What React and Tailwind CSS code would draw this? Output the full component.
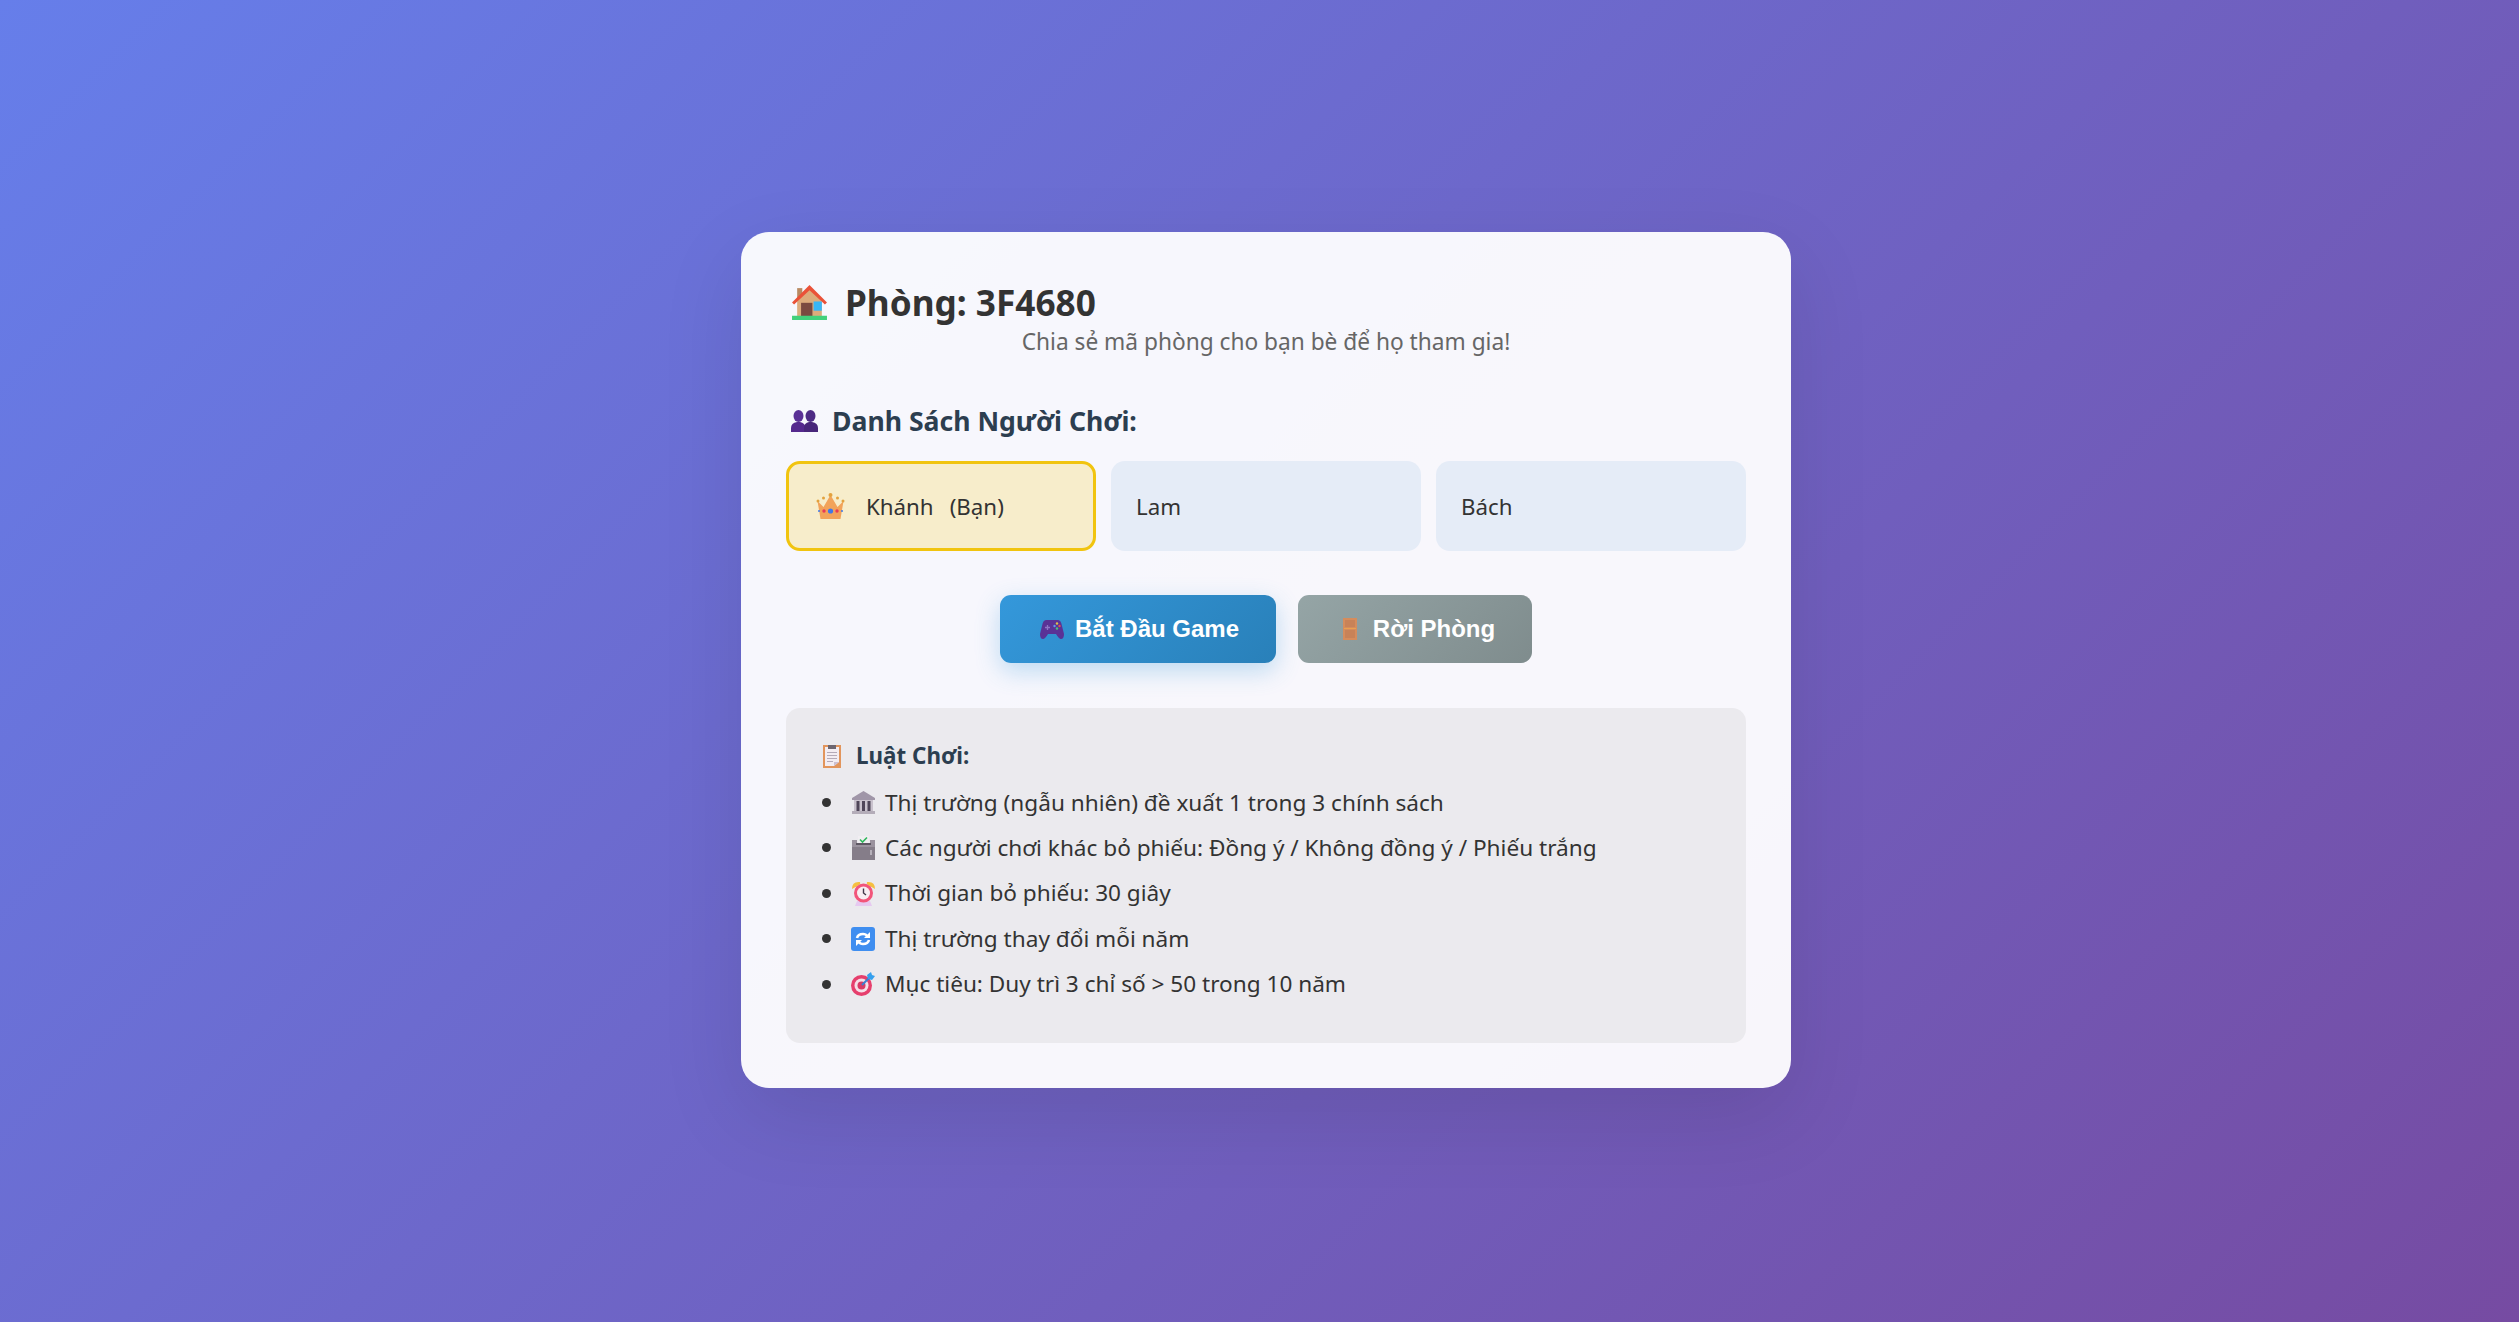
const font = "font-['Noto_Sans','Open_Sans',sans-serif]";

function House() {
  return (
    <svg viewBox="0 0 36 34" className="w-[37px] h-[35px]">
      <path d="M6 3h5v12H6z" fill="#b98a62" />
      <path d="M6 15 18 4l12 11v17H6z" fill="#dcac7c" />
      <path d="M1 17 18 0l17 17-2 2L18 5 3 19z" fill="#ea5238" />
      <path d="M8 15h13v17H8z" fill="#7a4a40" transform="translate(3 2) scale(.85 .9) translate(0 2)" />
      <path d="M22 16h8v9h-8z" fill="#38b6f6" />
      <path d="M1 30h34v4H1z" fill="#42d17b" />
    </svg>
  );
}

function People() {
  return (
    <svg viewBox="0 0 27 22" className="w-[27px] h-[22px]">
      <ellipse cx="7.500" cy="6" rx="5" ry="6" fill="#5a3096" />
      <path d="M0 22v-4q0-5 6-6h3q5 1 6 6v4z" fill="#55298e" />
      <ellipse cx="19.500" cy="6" rx="5" ry="6" fill="#4d2a84" />
      <path d="M13 22v-4q0-5 5-6h3q6 1 6 6v4z" fill="#48267a" />
    </svg>
  );
}

function Crown() {
  return (
    <svg viewBox="0 0 28 26" className="w-[29px] h-[26px]">
      <path d="M1 8l6 6 7-12 7 12 6-6-3 18H4z" fill="#f2a35a" />
      <circle cx="14" cy="2" r="2" fill="#e3a23e" />
      <circle cx="7" cy="5" r="1.500" fill="#e3a23e" />
      <circle cx="21" cy="5" r="1.500" fill="#e3a23e" />
      <circle cx="1.500" cy="8" r="1.500" fill="#e3a23e" />
      <circle cx="26.500" cy="8" r="1.500" fill="#e3a23e" />
      <circle cx="14" cy="18" r="2.600" fill="#3f78e8" />
      <circle cx="7.500" cy="18" r="1.700" fill="#e83a58" />
      <circle cx="20.500" cy="18" r="1.700" fill="#e83a58" />
      <circle cx="2.500" cy="18" r="1" fill="#3f78e8" />
      <circle cx="25.500" cy="18" r="1" fill="#3f78e8" />
    </svg>
  );
}

function Gamepad() {
  return (
    <svg viewBox="0 0 24 20" className="w-[24px] h-[20px]">
      <path d="M6 1h12q3 0 4 6l2 8q0 5-3 5-2 0-5-5h-8q-3 5-5 5-3 0-3-5l2-8q1-6 4-6z" fill="#5a3296" />
      <path d="M7.500 6v5M5 8.500h5" stroke="#8f74c6" strokeWidth="1.300" />
      <circle cx="17" cy="4.500" r="1.200" fill="#e0c04a" />
      <circle cx="19.500" cy="7" r="1.200" fill="#e0564a" />
      <circle cx="14.500" cy="7" r="1.200" fill="#5f9be8" />
      <circle cx="17" cy="9.500" r="1.200" fill="#48c47a" />
    </svg>
  );
}

function Door() {
  return (
    <svg viewBox="0 0 14 22" className="w-[14px] h-[22px]">
      <path d="M0 0h14v22H0z" fill="#d58c5c" />
      <path d="M2 2h10v7H2zM2 12h10v8H2z" fill="#c88258" />
      <path d="M1 10h12v1H1z" fill="#e9a050" />
    </svg>
  );
}

function Clipboard() {
  return (
    <svg viewBox="0 0 18 23" className="w-[18px] h-[23px]">
      <path d="M0 0h18v23H0z" fill="#e2955c" />
      <path d="M2 2h14v15l-5 4H2z" fill="#f3edf2" />
      <path d="M11 21v-4h5z" fill="#cdbfd0" />
      <path d="M5 0h8v4H5z" fill="#6d6670" />
      <path d="M4 7.500h10M4 10.500h10M4 13.500h10M4 16.500h6" stroke="#b4aab8" />
    </svg>
  );
}

function Bank() {
  return (
    <svg viewBox="0 0 23 23" className="w-[23px] h-[23px]">
      <path d="M11.500 0 23 7v2H0V7z" fill="#a096a8" />
      <path d="M2 9h19v11H2z" fill="#c9c2cd" />
      <path d="M4.500 10h3v10h-3zM10 10h3v10h-3zM15.500 10h3v10h-3z" fill="#4f4659" />
      <path d="M0 20h23v3H0z" fill="#b4adb9" />
    </svg>
  );
}

function Ballot() {
  return (
    <svg viewBox="0 0 23 24" className="w-[23px] h-[24px]">
      <path d="M6 0h11v8H6z" fill="#f1eef2" />
      <path d="m8 3.500 2.500 2.500L15 1.500" stroke="#2fb85c" strokeWidth="1.600" fill="none" />
      <path d="M0 4h5v4h13V4h5v20H0z" fill="#9a929e" />
      <path d="M0 11h23v13H0z" fill="#857d89" />
      <path d="M4 7h15v2H4z" fill="#5e5763" />
      <path d="M18 14h2v5h-2z" fill="#b6b0ba" />
    </svg>
  );
}

function Alarm() {
  return (
    <svg viewBox="0 0 23 25" className="w-[23px] h-[25px]">
      <path d="M0 8q0-8 8-7 1 2-1 3z" fill="#f5bf3f" />
      <path d="M23 8q0-8-8-7-1 2 1 3z" fill="#f5bf3f" />
      <path d="M5 20h13l2 5H3z" fill="#e6c9f0" />
      <circle cx="11.500" cy="12" r="9.500" fill="#f2557a" />
      <circle cx="11.500" cy="12" r="6.500" fill="#f8eef2" />
      <path d="M11.500 7.500V12l2.500 2" stroke="#43394a" strokeWidth="1.400" fill="none" />
    </svg>
  );
}

function Refresh() {
  return (
    <svg viewBox="0 0 24 24" className="w-[24px] h-[24px]">
      <rect width="24" height="24" rx="3" fill="#3f8ef0" />
      <path d="M6 11q1-4 6-4 3 0 4 2" fill="none" stroke="#fff" strokeWidth="2.600" />
      <path d="M13 11h6V5z" fill="#fff" />
      <path d="M18 13q-1 4-6 4-3 0-4-2" fill="none" stroke="#fff" strokeWidth="2.600" />
      <path d="M11 13H5v6z" fill="#fff" />
    </svg>
  );
}

function Target() {
  return (
    <svg viewBox="0 0 24 24" className="w-[24px] h-[24px]">
      <circle cx="10.500" cy="13.500" r="10.500" fill="#e63f6d" />
      <circle cx="10.500" cy="13.500" r="7" fill="#f5dfe8" />
      <circle cx="10.500" cy="13.500" r="4" fill="#d93a66" />
      <path d="m11 13 9-9" stroke="#3c7fd0" strokeWidth="2" />
      <path d="m16 3 4-3 1 3 3 1-3 4-4-1z" fill="#35a0ee" />
    </svg>
  );
}

const rules = [
  { icon: <Bank />, text: "Thị trường (ngẫu nhiên) đề xuất 1 trong 3 chính sách" },
  { icon: <Ballot />, text: "Các người chơi khác bỏ phiếu: Đồng ý / Không đồng ý / Phiếu trắng" },
  { icon: <Alarm />, text: "Thời gian bỏ phiếu: 30 giây" },
  { icon: <Refresh />, text: "Thị trường thay đổi mỗi năm" },
  { icon: <Target />, text: "Mục tiêu: Duy trì 3 chỉ số > 50 trong 10 năm" },
];

export default function App() {
  return (
    <div className={`min-h-screen pl-[13px] pb-[2px] flex items-center justify-center bg-[linear-gradient(135deg,#667eea_0%,#764ba2_100%)] ${font}`}>
      <div className="w-[1050px] p-[45px] rounded-[28px] bg-white/95 shadow-[0_28px_84px_rgba(0,0,0,0.1)] text-[#333]">
        <h2 className="h-[48px] mt-[1px] flex items-center gap-[12px] text-[35.2px] leading-[48px] font-bold">
          <span className="w-[47px] flex justify-center"><House /></span>
          <span>Phòng: 3F4680</span>
        </h2>
        <p className="mt-[3px] text-center text-[22.7px] leading-[26px] text-[#666]">Chia sẻ mã phòng cho bạn bè để họ tham gia!</p>

        <h3 className="mt-[48px] flex items-center gap-[9px] text-[26.6px] leading-[36px] font-bold text-[#2c3e50]">
          <span className="w-[37px] flex justify-center"><People /></span>
          <span>Danh Sách Người Chơi:</span>
        </h3>
        <div className="mt-[22px] grid grid-cols-3 gap-[15px]">
          <div className="h-[90px] pl-[27px] flex items-center gap-[21px] rounded-[14px] border-[3px] border-[#f1c40f] bg-[#f7edcb] text-[22.3px]">
            <Crown />
            <span>Khánh</span>
            <span className="ml-[-5px]">(Bạn)</span>
          </div>
          <div className="h-[90px] px-[25px] flex items-center rounded-[14px] bg-[#e5ecf7] text-[22.3px]">Lam</div>
          <div className="h-[90px] px-[25px] flex items-center rounded-[14px] bg-[#e5ecf7] text-[22.3px]">Bách</div>
        </div>

        <div className="mt-[44px] flex justify-center gap-[22px] font-['Liberation_Sans',Arial,sans-serif]">
          <button className="h-[68px] w-[276px] flex items-center justify-center gap-[7px] rounded-[11px] bg-[linear-gradient(135deg,#3498db,#2980b9)] text-white text-[24px] font-bold shadow-[0_8px_25px_rgba(52,152,219,0.3)]">
            <span className="w-[31px] flex justify-center"><Gamepad /></span>
            <span>Bắt Đầu Game</span>
          </button>
          <button className="h-[68px] w-[234px] flex items-center justify-center gap-[7px] rounded-[11px] bg-[linear-gradient(135deg,#95a5a6,#7f8c8d)] text-white text-[24px] font-bold">
            <span className="w-[31px] flex justify-center"><Door /></span>
            <span>Rời Phòng</span>
          </button>
        </div>

        <div className="mt-[45px] pt-[31px] px-[34px] pb-[36px] rounded-[14px] bg-[#ebeaee]">
          <div className="flex items-center gap-[12px] text-[22.4px] font-bold text-[#2c3e50]">
            <span className="w-[24px] flex justify-center"><Clipboard /></span>
            <span>Luật Chơi:</span>
          </div>
          <ul className="mt-[7px]">
            {rules.map((r) => (
              <li key={r.text} className="h-[45.400px] flex items-center text-[22.6px]">
                <span className="w-[9px] h-[9px] mr-[20px] ml-[2px] rounded-full bg-[#333]" />
                <span className="w-[24px] mr-[10px] flex justify-center">{r.icon}</span>
                <span>{r.text}</span>
              </li>
            ))}
          </ul>
        </div>
      </div>
    </div>
  );
}
